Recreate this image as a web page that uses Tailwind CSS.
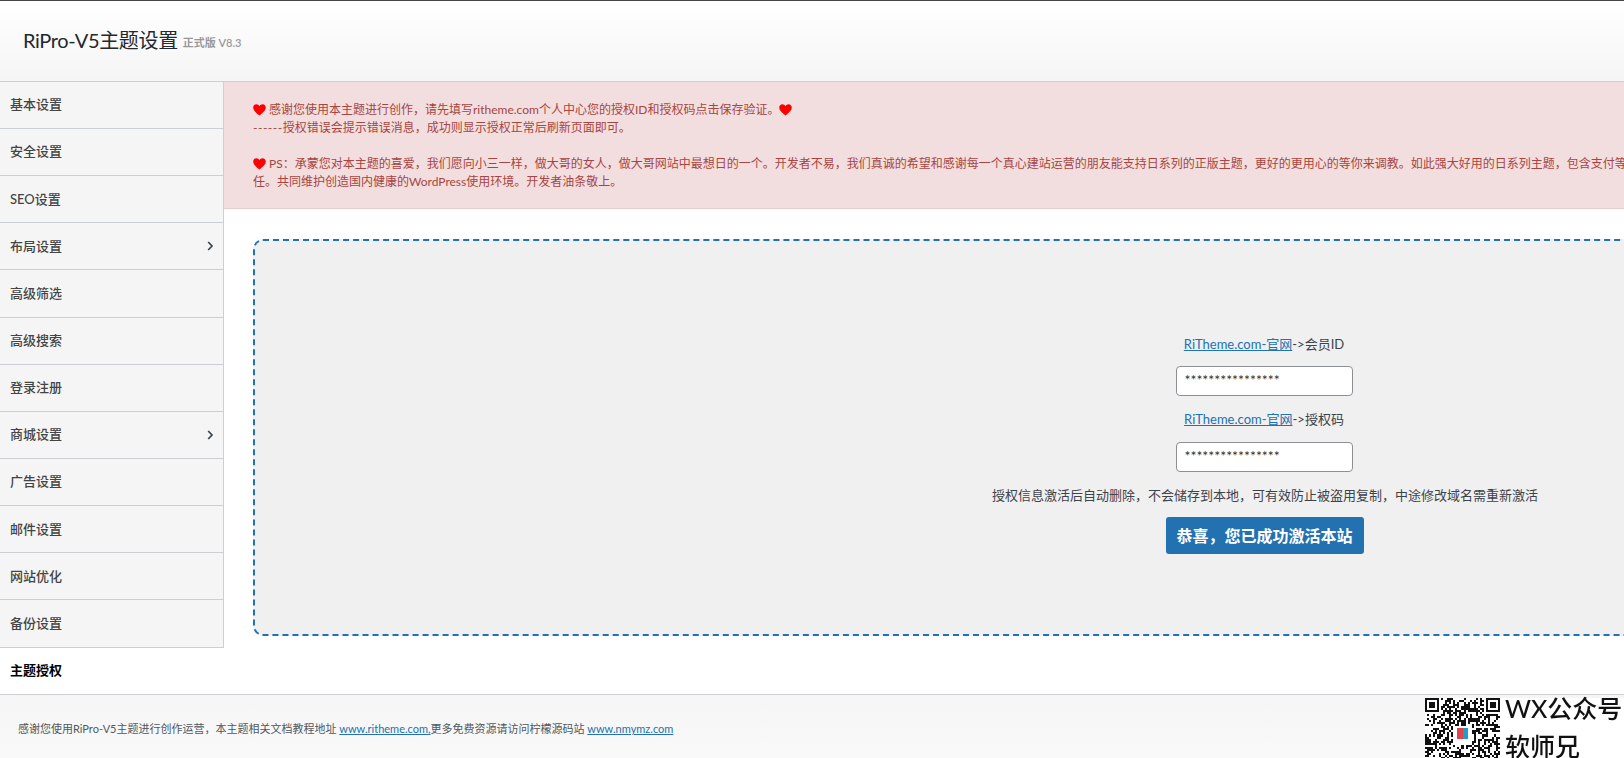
<!DOCTYPE html>
<html lang="zh-CN">
  <head>
    <meta charset="UTF-8" />
    <title>RiPro-V5主题设置</title>
    <script src="https://cdn.jsdelivr.net/npm/@tailwindcss/browser@4"></script>
  </head>
  <body class="h-[758px] w-[1624px] overflow-hidden bg-white font-['Lato','Noto_Sans_CJK_SC',sans-serif] text-[13px] text-[#3c434a]">
    <!-- Header -->
    <header class="flex h-[82px] items-center border-t border-b border-t-[#444444] border-b-[#ccd0d4] bg-gradient-to-b from-white to-[#f5f5f5] pl-[23px]">
      <h1 class="-mt-[3px] text-[20px] leading-none tracking-[-0.35px] text-[#23282d]">RiPro-V5主题设置</h1>
      <span class="ml-[5px] mt-[4px] text-[11px] font-semibold text-[#999999]">正式版 V8.3</span>
    </header>

    <div class="flex h-[612px]">
      <!-- Sidebar -->
      <nav class="w-[224px] shrink-0 font-medium text-[#444444]">
        <a class="flex h-[47.12px] items-center border-r border-b border-[#ccd0d4] bg-[#f5f5f5] px-[10px]">基本设置</a>
        <a class="flex h-[47.12px] items-center border-r border-b border-[#ccd0d4] bg-[#f5f5f5] px-[10px]">安全设置</a>
        <a class="flex h-[47.12px] items-center border-r border-b border-[#ccd0d4] bg-[#f5f5f5] px-[10px]">SEO设置</a>
        <a class="flex h-[47.12px] items-center justify-between border-r border-b border-[#ccd0d4] bg-[#f5f5f5] pl-[10px] pr-[9px]">布局设置
          <svg width="7" height="10" viewBox="0 0 7 10" fill="none" stroke="#3c434a" stroke-width="1.7"><path d="M1.2 1 5 5 1.2 9" /></svg>
        </a>
        <a class="flex h-[47.12px] items-center border-r border-b border-[#ccd0d4] bg-[#f5f5f5] px-[10px]">高级筛选</a>
        <a class="flex h-[47.12px] items-center border-r border-b border-[#ccd0d4] bg-[#f5f5f5] px-[10px]">高级搜索</a>
        <a class="flex h-[47.12px] items-center border-r border-b border-[#ccd0d4] bg-[#f5f5f5] px-[10px]">登录注册</a>
        <a class="flex h-[47.4px] items-center justify-between border-r border-b border-[#ccd0d4] bg-[#f5f5f5] pl-[10px] pr-[9px]">商城设置
          <svg width="7" height="10" viewBox="0 0 7 10" fill="none" stroke="#3c434a" stroke-width="1.7"><path d="M1.2 1 5 5 1.2 9" /></svg>
        </a>
        <a class="flex h-[47.12px] items-center border-r border-b border-[#ccd0d4] bg-[#f5f5f5] px-[10px]">广告设置</a>
        <a class="flex h-[47.12px] items-center border-r border-b border-[#ccd0d4] bg-[#f5f5f5] px-[10px]">邮件设置</a>
        <a class="flex h-[47.12px] items-center border-r border-b border-[#ccd0d4] bg-[#f5f5f5] px-[10px]">网站优化</a>
        <a class="flex h-[47.4px] items-center border-r border-b border-[#ccd0d4] bg-[#f5f5f5] px-[10px]">备份设置</a>
        <a class="flex h-[46px] items-center bg-white px-[10px] font-bold text-black">主题授权</a>
      </nav>

      <!-- Main -->
      <main class="w-[2080px] shrink-0">
        <div class="h-[127px] whitespace-nowrap border-b border-[#ebccd1] bg-[#f2dede] pl-[29px] pt-[19px] text-[12px] leading-[18px] text-[#a94442]">
          <p class="flex items-center">
            <svg class="mr-[3px]" width="13" height="12" viewBox="0 0 13 12" fill="#ff0000"><path d="M6.500 11.600C2.500 8.400.2 6.200.2 3.600.2 1.700 1.600.3 3.400.3c1.300 0 2.400.7 3.100 1.900C7.200 1 8.300.3 9.600.3c1.800 0 3.200 1.400 3.200 3.300 0 2.600-2.300 4.800-6.300 8z" /></svg>
            感谢您使用本主题进行创作，请先填写ritheme.com个人中心您的授权ID和授权码点击保存验证。
            <svg class="ml-0" width="13" height="12" viewBox="0 0 13 12" fill="#ff0000"><path d="M6.500 11.600C2.500 8.400.2 6.200.2 3.600.2 1.700 1.600.3 3.400.3c1.300 0 2.400.7 3.100 1.900C7.200 1 8.300.3 9.600.3c1.800 0 3.200 1.400 3.200 3.300 0 2.600-2.300 4.800-6.300 8z" /></svg>
          </p>
          <p><span class="tracking-[0.5px]">------</span>授权错误会提示错误消息，成功则显示授权正常后刷新页面即可。</p>
          <p class="mt-[18px] flex items-center">
            <svg class="mr-[3px]" width="13" height="12" viewBox="0 0 13 12" fill="#ff0000"><path d="M6.500 11.600C2.500 8.400.2 6.200.2 3.600.2 1.700 1.600.3 3.400.3c1.300 0 2.400.7 3.100 1.900C7.200 1 8.300.3 9.600.3c1.800 0 3.200 1.400 3.200 3.300 0 2.600-2.300 4.800-6.300 8z" /></svg>
            PS：承蒙您对本主题的喜爱，我们愿向小三一样，做大哥的女人，做大哥网站中最想日的一个。开发者不易，我们真诚的希望和感谢每一个真心建站运营的朋友能支持日系列的正版主题，更好的更用心的等你来调教。如此强大好用的日系列主题，包含支付等
          </p>
          <p>任。共同维护创造国内健康的WordPress使用环境。开发者油条敬上。</p>
        </div>

        <!-- Activation box -->
        <div class="ml-[29px] mt-[30px] flex h-[397px] w-[2022px] flex-col items-center rounded-[10px] border-2 border-dashed border-[#2271b1] bg-[#f0f0f0] pt-[94px]">
          <p class="leading-[18px]"><a class="text-[#2271b1] underline">RiTheme.com-官网</a>-&gt;会员ID</p>
          <input class="mt-[13px] h-[30px] w-[177px] rounded-[4px] border border-[#8c8f94] bg-white px-[8px] pb-[4px] text-[14px] text-[#2c3338]" value="****************" />
          <p class="mt-[14px] leading-[18px]"><a class="text-[#2271b1] underline">RiTheme.com-官网</a>-&gt;授权码</p>
          <input class="mt-[14px] h-[30px] w-[177px] rounded-[4px] border border-[#8c8f94] bg-white px-[8px] pb-[4px] text-[14px] text-[#2c3338]" value="****************" />
          <p class="ml-[2px] mt-[14px] text-[13px] leading-[18px]">授权信息激活后自动删除，不会储存到本地，可有效防止被盗用复制，中途修改域名需重新激活</p>
          <button class="ml-[1px] mt-[13px] h-[37px] w-[198px] rounded-[3px] bg-[#2271b1] text-[16px] font-semibold text-white">恭喜，您已成功激活本站</button>
        </div>
      </main>
    </div>

    <!-- Footer -->
    <footer class="relative flex h-[64px] border-t border-[#ccd0d4] bg-gradient-to-b from-[#f5f5f5] to-[#f9f9f9]">
      <p class="ml-[18px] mt-[26px] text-[11px] leading-[16px] text-[#50575e]">
        感谢您使用RiPro-V5主题进行创作运营，本主题相关文档教程地址
        <a class="text-[#2271b1] underline">www.ritheme.com,</a>更多免费资源请访问柠檬源码站
        <a class="text-[#2271b1] underline">www.nmymz.com</a>
      </p>
      <div class="absolute left-[1425px] top-[3px] flex h-[61px] w-[199px] bg-white">
        <svg id="qr" class="shrink-0 blur-[0.4px]" width="75" height="75" viewBox="0 0 37 37" shape-rendering="crispEdges">
          <path id="qr-dots" fill="#111111" d="" />
          <path fill="none" stroke="#111111" d="M.5.5h6v6h-6zM30.500.5h6v6h-6zM.5 30.500h6v6h-6z" />
          <path fill="#111111" d="M2 2h3v3H2zM32 2h3v3h-3zM2 32h3v3H2z" />
          <rect x="14" y="14" width="9" height="9" fill="#ffffff" />
          <rect x="16" y="15" width="2.500" height="5" fill="#e0454f" />
          <rect x="18.500" y="15" width="2.500" height="5" fill="#1e9fc4" />
        </svg>
        <div class="ml-[5px] text-[25px] font-medium text-[#111111] blur-[0.3px]">
          <p class="h-[21px] whitespace-nowrap leading-[21px]">WX公众号</p>
          <p class="mt-[17px] h-[21px] leading-[21px]">软师兄</p>
        </div>
      </div>
    </footer>

    <script>
      // placeholder pattern for the QR code modules
      let seed = 7;
      let d = "";
      for (let y = 0; y < 37; y++) {
        for (let x = 0; x < 37; x++) {
          seed = (seed * 1103515245 + 12345) & 0x7fffffff;
          const corner = (x < 8 && y < 8) || (x > 28 && y < 8) || (x < 8 && y > 28);
          if (!corner && (seed >> 16) % 100 < 50) d += `M${x} ${y}h1v1h-1z`;
        }
      }
      document.getElementById("qr-dots").setAttribute("d", d);
    </script>
  </body>
</html>
